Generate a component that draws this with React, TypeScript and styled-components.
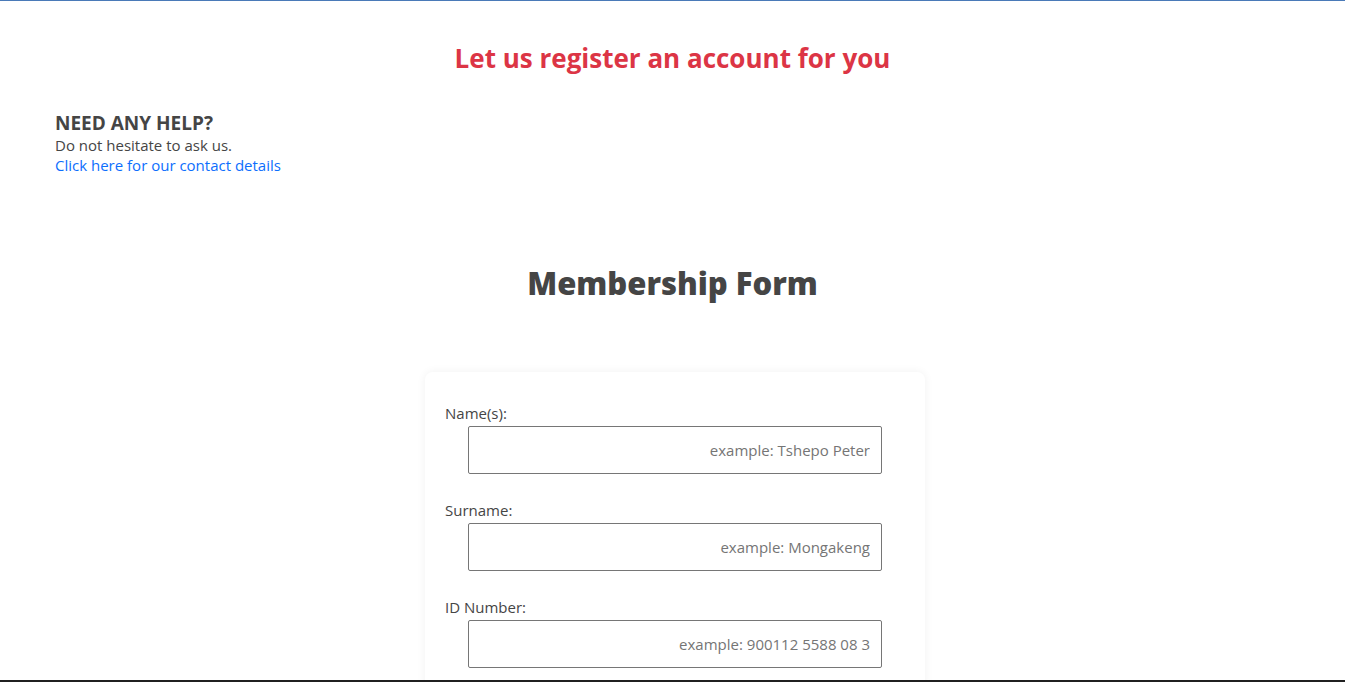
import React from "react";
import styled, { createGlobalStyle } from "styled-components";

const Global = createGlobalStyle`
  html, body { margin: 0; padding: 0; background: #fff; }
  body { font-family: "Open Sans", "Noto Sans", sans-serif; color: #454545; }
  * { box-sizing: border-box; }
`;

const Page = styled.div`
  border-top: 1px solid #4a7ab8;
  min-height: 682px;
  display: flex;
  flex-direction: column;
`;

const Headline = styled.h1`
  margin: 40px 0 0;
  text-align: center;
  color: #dc3545;
  font-size: 26px;
  font-weight: 700;
  line-height: 34px;
`;

const Help = styled.section`
  margin: 36px 0 0 55px;
  display: flex;
  flex-direction: column;
`;

const HelpTitle = styled.h2`
  margin: 0;
  font-size: 19px;
  font-weight: 700;
  line-height: 25px;
  color: #454545;
`;

const HelpText = styled.p`
  margin: 0;
  font-size: 15px;
  line-height: 19px;
`;

const HelpLink = styled.a`
  font-size: 15px;
  line-height: 20px;
  color: #0d6efd;
  text-decoration: none;
`;

const FormTitle = styled.h2`
  margin: 88px 0 0;
  text-align: center;
  font-size: 31px;
  font-weight: 800;
  line-height: 40px;
  color: #454545;
`;

const Card = styled.form`
  align-self: center;
  width: 500px;
  margin: 69px 0 0 5px;
  padding: 32px 20px 20px;
  border-radius: 8px;
  background: #fff;
  box-shadow: 0 0 10px rgba(0, 0, 0, 0.06);
  display: flex;
  flex-direction: column;
  gap: 27px;
`;

const Field = styled.div`
  display: flex;
  flex-direction: column;
  gap: 3px;
`;

const Label = styled.label`
  font-size: 15px;
  line-height: 19px;
  color: #454545;
`;

const Input = styled.input`
  margin-left: 23px;
  width: 414px;
  height: 48px;
  border: 1px solid #767676;
  border-radius: 2px;
  padding: 0 11px;
  text-align: right;
  font-family: "Open Sans", "Noto Sans", sans-serif;
  font-size: 15px;
  color: #333;
  &::placeholder { color: #757575; }
`;

const BottomBar = styled.div`
  position: fixed;
  left: 0;
  right: 0;
  bottom: 0;
  height: 2px;
  background: #202020;
`;

const fields = [
  { id: "name", label: "Name(s):", ph: "example: Tshepo Peter" },
  { id: "surname", label: "Surname:", ph: "example: Mongakeng" },
  { id: "idnum", label: "ID Number:", ph: "example: 900112 5588 08 3" },
];

export default function App() {
  return (
    <>
      <Global />
      <Page>
        <Headline>Let us register an account for you</Headline>
        <Help>
          <HelpTitle>NEED ANY HELP?</HelpTitle>
          <HelpText>Do not hesitate to ask us.</HelpText>
          <HelpLink href="#">Click here for our contact details</HelpLink>
        </Help>
        <FormTitle>Membership Form</FormTitle>
        <Card>
          {fields.map((f) => (
            <Field key={f.id}>
              <Label htmlFor={f.id}>{f.label}</Label>
              <Input id={f.id} placeholder={f.ph} />
            </Field>
          ))}
        </Card>
      </Page>
      <BottomBar />
    </>
  );
}
